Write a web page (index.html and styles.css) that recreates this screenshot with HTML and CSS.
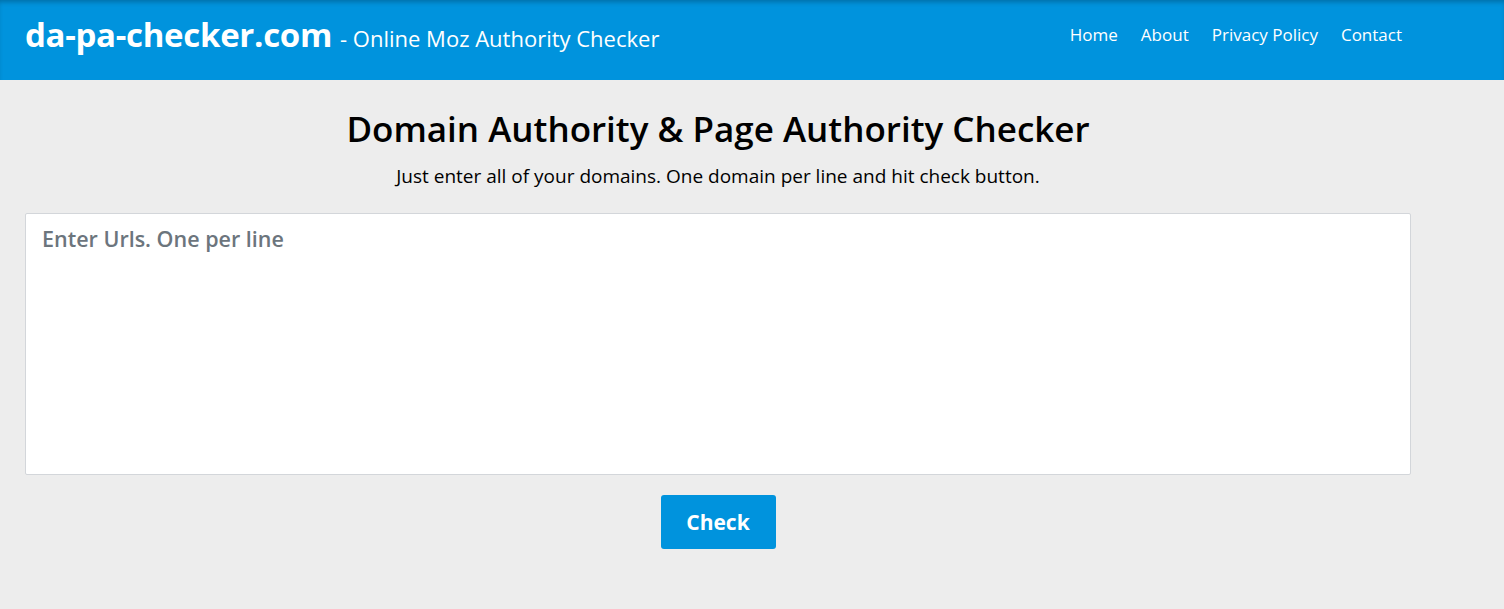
FILE: index.html
```html
<!DOCTYPE html>
<html lang="en">
<head>
<title>da-pa-checker.com - Online Moz Authority Checker</title>
<link rel="stylesheet" href="styles.css">
</head>
<body>
<header class="site-header">
    <div class="header-inner">
        <div class="brand">
            <a class="brand-name" href="#">da-pa-checker.com</a>
            <span class="brand-tag">- Online Moz Authority Checker</span>
        </div>
        <nav class="main-nav">
            <a href="#">Home</a>
            <a href="#">About</a>
            <a href="#">Privacy Policy</a>
            <a href="#">Contact</a>
        </nav>
    </div>
</header>
<main class="checker">
    <h1 class="checker-title">Domain Authority &amp; Page Authority Checker</h1>
    <p class="checker-lead">Just enter all of your domains. One domain per line and hit check button.</p>
    <form class="checker-form">
        <textarea class="url-input" placeholder="Enter Urls. One per line"></textarea>
        <div class="form-submit">
            <button type="submit" class="check-btn">Check</button>
        </div>
    </form>
</main>
</body>
</html>
```

FILE: styles.css
```css
html, body {
    margin: 0;
    height: 100%;
    background-color: #ededed;
    font-family: "Open Sans", "Noto Sans", sans-serif;
    color: #000;
}

.site-header {
    height: 80px;
    background-color: #0093dd;
    box-shadow: inset 0 4px 5px -2px rgba(0, 0, 0, 0.25);
}

.header-inner {
    display: flex;
    align-items: center;
    justify-content: space-between;
    height: 100%;
    padding: 0 102px 11px 25px;
    box-sizing: border-box;
}

.brand {
    display: flex;
    align-items: baseline;
    gap: 8px;
    color: white;
}

.brand-name {
    color: white;
    text-decoration: none;
    font-size: 33px;
    font-weight: 700;
    letter-spacing: -0.3px;
}

.brand-tag {
    font-size: 22px;
}

.main-nav {
    display: flex;
    gap: 23px;
    padding-bottom: 1px;
}

.main-nav a {
    color: white;
    text-decoration: none;
    font-size: 17px;
}

.checker {
    width: 1386px;
    margin-left: 25px;
    display: flex;
    flex-direction: column;
    align-items: center;
}

.checker-title {
    margin: 27px 0 0;
    font-size: 35px;
    font-weight: 600;
    line-height: 44px;
}

.checker-lead {
    margin: 13px 0 0;
    font-size: 19px;
    line-height: 24px;
}

.checker-form {
    width: 100%;
    margin-top: 25px;
}

.url-input {
    display: block;
    width: 100%;
    height: 262px;
    box-sizing: border-box;
    border: 1px solid #d3d6da;
    border-radius: 2px;
    padding: 10px 16px;
    font-family: inherit;
    font-size: 21.5px;
    font-weight: 600;
    resize: none;
    outline: none;
}

.url-input::placeholder {
    color: #6c757d;
}

.form-submit {
    display: flex;
    justify-content: center;
    margin-top: 20px;
}

.check-btn {
    width: 115px;
    height: 54px;
    border: none;
    border-radius: 3px;
    background-color: #0093dd;
    color: white;
    font-family: inherit;
    font-size: 21px;
    font-weight: 700;
    cursor: pointer;
}
```
